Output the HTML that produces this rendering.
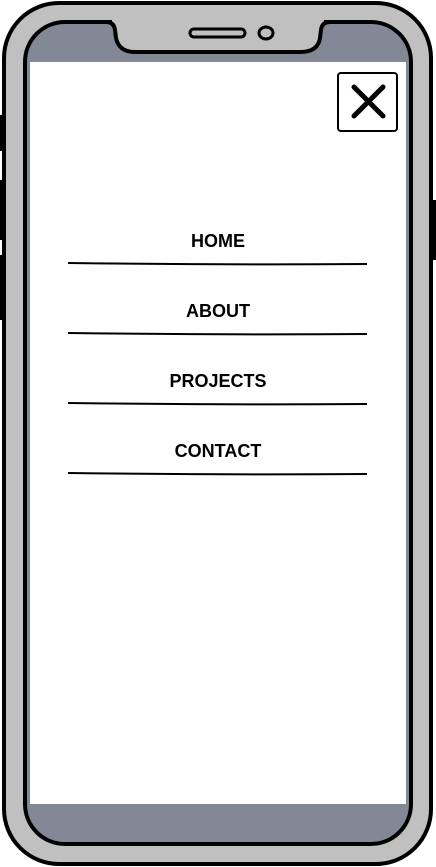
<!DOCTYPE html>
<html><head><style>
html,body{margin:0;padding:0;width:436px;height:867px;overflow:hidden;background:#fff}
.t{position:absolute;left:0;width:436px;text-align:center;font-family:"Liberation Sans",sans-serif;font-weight:bold;font-size:18px;color:#000}
</style></head><body>
<svg width="436" height="867" style="position:absolute;left:0;top:0">
<rect x="0" y="115" width="5" height="36" fill="#000"/>
<rect x="0" y="180" width="5" height="60" fill="#000"/>
<rect x="0" y="255" width="5" height="65" fill="#000"/>
<rect x="431" y="200" width="5" height="60" fill="#000"/>
<rect x="4" y="3" width="427" height="861" rx="55" fill="#c0c0c0" stroke="#000" stroke-width="4"/>
<rect x="25" y="22" width="386" height="822" rx="40" fill="#838896" stroke="#000" stroke-width="4"/>
<rect x="30" y="62" width="376" height="742" fill="#fff"/>
<rect x="112" y="17" width="212" height="7" fill="#c0c0c0"/>
<path d="M106 22 Q114 22 115 30 L116 38 Q119 52 135 52 L300 52 Q318 52 320 38 L321 30 Q322 22 330 22" fill="#c0c0c0" stroke="#000" stroke-width="4"/>
<rect x="190" y="29" width="55" height="8" rx="4" fill="#c0c0c0" stroke="#000" stroke-width="3"/>
<ellipse cx="266" cy="33" rx="7" ry="6" fill="#c0c0c0" stroke="#000" stroke-width="3"/>
<rect x="338" y="73" width="59" height="58" rx="3" fill="#fff" stroke="#000" stroke-width="2"/>
<path d="M354 87 L383 116 M383 87 L354 116" stroke="#000" stroke-width="5" stroke-linecap="round"/>
<g stroke="#000" stroke-width="2" fill="none">
<path d="M68 263 Q220 265 367 264"/>
<path d="M68 333 Q220 335 367 334"/>
<path d="M68 403 Q220 405 367 404"/>
<path d="M68 473 Q220 475 367 474"/>
</g>
</svg>
<div class="t" style="top:231px">HOME</div>
<div class="t" style="top:301px">ABOUT</div>
<div class="t" style="top:371px">PROJECTS</div>
<div class="t" style="top:441px">CONTACT</div>
</body></html>
